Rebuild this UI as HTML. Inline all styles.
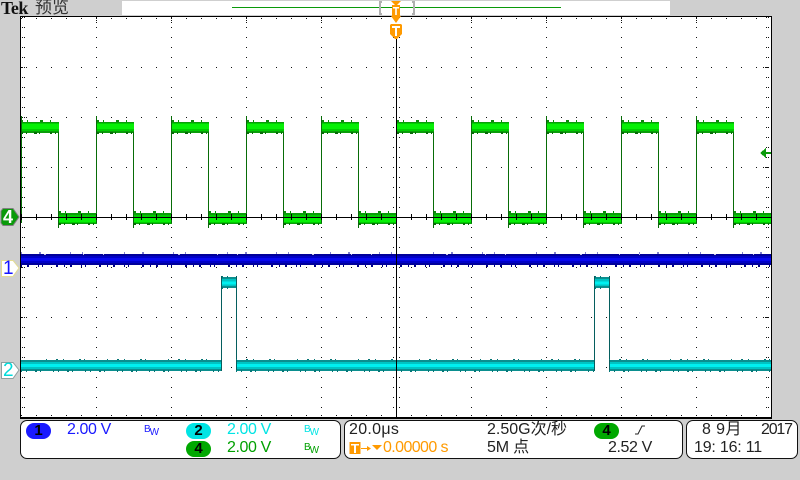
<!DOCTYPE html>
<html lang="zh">
<head>
<meta charset="utf-8">
<title>Tek 预览</title>
<style>
html,body{margin:0;padding:0;background:#cfcfcf}
#s{position:relative;width:800px;height:480px;overflow:hidden;background:#cfcfcf;font-family:"Liberation Sans","Noto Sans CJK SC",sans-serif}
svg{position:absolute;left:0;top:0}
.t{position:absolute;white-space:pre;font-size:16px;line-height:16px;letter-spacing:-.4px}
.p{position:absolute;background:#fff;border:1px solid #111;box-sizing:border-box}
.o{position:absolute;width:25px;height:16px;border-radius:8px;color:#000;font:bold 15px/16px "Liberation Sans",sans-serif;text-align:center}
.b{position:absolute;font-size:10px;line-height:10px}
.b i{font-style:normal;position:relative;left:-1px;top:3px}
</style>
</head>
<body>
<div id="s">
<div style="position:absolute;left:122px;top:1px;width:548px;height:14px;background:#fff"></div>
<div class="t" style="left:1px;top:-1px;font:bold 18px/18px 'Liberation Serif',serif;letter-spacing:-.5px;color:#111">Tek</div>
<div class="t" style="left:35px;top:-2px;font-size:17px;line-height:20px;letter-spacing:0;color:#333">预览</div>

<div class="p" style="left:20px;top:420px;width:321px;height:39px;border-radius:7px"></div>
<div class="p" style="left:344px;top:420px;width:339px;height:39px;border-radius:7px"></div>
<div class="p" style="left:686px;top:420px;width:112px;height:39px;border-radius:7px"></div>

<svg width="800" height="480" viewBox="0 0 800 480" shape-rendering="crispEdges">
<line x1="232" y1="7.5" x2="561" y2="7.5" stroke="#0a9a0a"/>
<path d="M382 2H380V14H382M412 2H414V14H412" fill="none" stroke="#b0b0b0" stroke-width="2"/>
<rect x="20.500" y="16" width="751" height="402" fill="#fff"/>

<g fill="none" stroke="#111" stroke-width="1">
<path stroke-dasharray="1 9" d="M96.500 17V418M171.500 17V418M246.500 17V418M321.500 17V418M471.500 17V418M546.500 17V418M621.500 17V418M696.500 17V418M393.500 17V418M399.500 17V418M22.500 17V418M24.500 17V418M766.500 17V418M768.500 17V418"/>
<path stroke-dasharray="1 14" d="M21 67.500H771M21 117.500H771M21 167.500H771M21 267.500H771M21 317.500H771M21 367.500H771M21 18.500H771M21 415.500H771"/>
<path stroke-dasharray="1 1" d="M24 67.500H28M24 117.500H28M24 167.500H28M24 317.500H28M763 67.500H769M763 167.500H769M763 317.500H769M96.500 18V23M171.500 18V23M246.500 18V23M321.500 18V23M471.500 18V23M546.500 18V23M621.500 18V23M696.500 18V23"/>
</g>

<!-- channel 4 -->
<g fill="none">
<path stroke="#0a9e0a" stroke-width="11" d="M21 127.500H59M97 127.500H134M172 127.500H209M247 127.500H284M322 127.500H359M397 127.500H434M472 127.500H509M547 127.500H584M622 127.500H659M697 127.500H734M59 218.500H97M134 218.500H172M209 218.500H247M284 218.500H322M359 218.500H397M434 218.500H472M509 218.500H547M584 218.500H622M659 218.500H697M734 218.500H771"/>
<path stroke="#00cc00" stroke-width="8" d="M21 127H59M97 127H134M172 127H209M247 127H284M322 127H359M397 127H434M472 127H509M547 127H584M622 127H659M697 127H734M59 219H97M134 219H172M209 219H247M284 219H322M359 219H397M434 219H472M509 219H547M584 219H622M659 219H697M734 219H771"/>
<path stroke="#06f006" stroke-width="5" d="M21 126.500H59M97 126.500H134M172 126.500H209M247 126.500H284M322 126.500H359M397 126.500H434M472 126.500H509M547 126.500H584M622 126.500H659M697 126.500H734M59 219.500H97M134 219.500H172M209 219.500H247M284 219.500H322M359 219.500H397M434 219.500H472M509 219.500H547M584 219.500H622M659 219.500H697M734 219.500H771"/>
<path stroke="#0b8a0b" stroke-width="2" stroke-dasharray="2 4 1 12 3 7 1 15" d="M21 121H59M97 121H134M172 121H209M247 121H284M322 121H359M397 121H434M472 121H509M547 121H584M622 121H659M697 121H734M59 212H97M134 212H172M209 212H247M284 212H322M359 212H397M434 212H472M509 212H547M584 212H622M659 212H697M734 212H771"/>
<path stroke="#086a08" stroke-width="2" stroke-dasharray="2 3 1 7 3 2 1 10" d="M21 133H59M97 133H134M172 133H209M247 133H284M322 133H359M397 133H434M472 133H509M547 133H584M622 133H659M697 133H734M59 224H97M134 224H172M209 224H247M284 224H322M359 224H397M434 224H472M509 224H547M584 224H622M659 224H697M734 224H771"/>
<path stroke="#086c08" d="M58.500 132V228M96.500 116V223M133.500 132V228M171.500 116V223M208.500 132V228M246.500 116V223M283.500 132V228M321.500 116V223M358.500 132V228M396.500 116V223M433.500 132V228M471.500 116V223M508.500 132V228M546.500 116V223M583.500 132V228M621.500 116V223M658.500 132V228M696.500 116V223M733.500 132V228M21.500 116V223"/>
</g>

<!-- channel 1 -->
<g fill="none">
<rect x="21" y="254" width="750" height="11" fill="#00009a"/>
<rect x="21" y="256" width="750" height="7" fill="#0000c8"/>
<rect x="21" y="258" width="750" height="3" fill="#0808f0"/>
<line x1="21" x2="771" y1="253" y2="253" stroke="#00009a" stroke-dasharray="1 17 2 29 1 11 1 41"/>
<line x1="21" x2="771" y1="254.500" y2="254.500" stroke="#fff" stroke-opacity=".75" stroke-dasharray="0 23 2 37 1 19 1 51"/>
<line x1="21" x2="771" y1="266" y2="266" stroke="#00008a" stroke-width="2" stroke-dasharray="1 5 2 9 1 3 1 13 2 6"/>
</g>

<!-- channel 2 -->
<g fill="none">
<path stroke="#0a8f8f" stroke-width="11" d="M21 365.500H222M236 365.500H595M609 365.500H771M222 282.500H236M595 282.500H609"/>
<path stroke="#00c4c4" stroke-width="7" d="M21 365.500H222M236 365.500H595M609 365.500H771M222 282.500H236M595 282.500H609"/>
<path stroke="#00f0f0" stroke-width="3" d="M21 365.500H222M236 365.500H595M609 365.500H771M222 283H236M595 283H609"/>
<path stroke="#055f5f" d="M221.500 276V371M236.500 276V371M594.500 276V371M609.500 276V371"/>
<path stroke="#067676" stroke-dasharray="1 9 2 5 1 15 2 3 1 22" d="M46 359.500H222M236 359.500H595M609 359.500H771"/>
<path stroke="#067676" stroke-width="2" stroke-dasharray="1 4 1 8 2 3 1 12" d="M21 371H222M236 371H595M609 371H771M222 277H236M595 277H609M222 288H236M595 288H609"/>
</g>

<!-- axes and crosshair -->
<path fill="none" stroke="#000" d="M21 217.500H771M396.500 38V418"/>
<path fill="none" stroke="#000" stroke-dasharray="1 14" stroke-width="6" d="M21 217H771"/>
<rect x="20.500" y="16.500" width="751" height="401" fill="none" stroke="#000"/>
<line x1="20" x2="772" y1="418.500" y2="418.500" stroke="#000"/>
<path fill="#0a9a0a" d="M760 153 766 148V152H771V154H766V158Z"/>

<!-- trigger markers -->
<g shape-rendering="auto">
<path fill="#ff9a00" d="M391 1H401L396 6Z"/>
<rect x="392" y="5" width="8" height="11" fill="#ff9a00"/>
<path fill="#fff" d="M393 7H399V8.500H396.800V15H395.200V8.500H393Z"/>
<path fill="#ff9a00" d="M391 16H401L396 23Z"/>
<path fill="#ff9a00" d="M391 24H401L402 25V34L397 39H395L390 34V25Z"/>
<path fill="#fff" d="M392 26H400V28H397V36H395V28H392Z"/>

<path fill="#0a9a0a" stroke="#7f7f7f" d="M3 208.500H13L19 217 13 225.500H3L1 223V211Z"/>
<path fill="#fff" stroke="#e4dc90" d="M1.500 260.500H13L19 268 13 276.500H1.500Z"/>
<path fill="#fff" stroke="#8f9f9f" d="M1.500 362.500H13L19 370 13 378.500H1.500Z"/>
</g>
</svg>

<div class="t" style="left:3px;top:208px;color:#fff;font-weight:bold;font-size:18px;line-height:18px;letter-spacing:0">4</div>
<div class="t" style="left:3px;top:260px;color:#1414ff;font-size:19px;line-height:18px;letter-spacing:0">1</div>
<div class="t" style="left:3px;top:362px;color:#00dcdc;font-size:19px;line-height:18px;letter-spacing:0">2</div>

<div class="o" style="left:26px;top:423px;background:#1a1aff">1</div>
<div class="t" style="left:67px;top:422px;color:#1a1aff">2.00 V</div>
<div class="b" style="left:144px;top:425px;color:#1a1aff">B<i>W</i></div>
<div class="o" style="left:186px;top:423px;background:#00e4e4">2</div>
<div class="t" style="left:227px;top:422px;color:#00e4e4">2.00 V</div>
<div class="b" style="left:304px;top:425px;color:#00e4e4">B<i>W</i></div>
<div class="o" style="left:186px;top:441px;background:#00a800">4</div>
<div class="t" style="left:227px;top:440px;color:#00a000">2.00 V</div>
<div class="b" style="left:304px;top:443px;color:#00a000">B<i>W</i></div>

<div class="t" style="left:349px;top:422px;color:#222;letter-spacing:.3px">20.0μs</div>
<div class="t" style="left:487px;top:422px;color:#222;letter-spacing:0">2.50G次/秒</div>
<div class="o" style="left:594px;top:423px;background:#00a800">4</div>
<svg width="800" height="480" viewBox="0 0 800 480" style="pointer-events:none">
<path d="M635 434H638L642 426H645" fill="none" stroke="#222"/>
<rect x="349.500" y="442" width="11" height="12" fill="#ff9a00"/>
<path d="M351 444H359V445.500H356V453H354V445.500H351Z" fill="#fff"/>
<path d="M361 448.500H369" stroke="#ff9a00" fill="none"/>
<path d="M367 446 371 448.500 367 451Z" fill="#ff9a00"/>
<path d="M372 445H382L377 450Z" fill="#ff9a00"/>
</svg>
<div class="t" style="left:383px;top:440px;color:#ff9a00;letter-spacing:-.6px">0.00000 s</div>
<div class="t" style="left:487px;top:440px;color:#222;letter-spacing:-.2px">5M 点</div>
<div class="t" style="left:608px;top:440px;color:#222">2.52 V</div>

<div class="t" style="left:702px;top:422px;color:#222;letter-spacing:.4px">8 9月</div>
<div class="t" style="left:761px;top:422px;color:#222;letter-spacing:-1.2px">2017</div>
<div class="t" style="left:694px;top:440px;color:#222;letter-spacing:-.2px">19: 16: 11</div>
</div>
</body>
</html>
